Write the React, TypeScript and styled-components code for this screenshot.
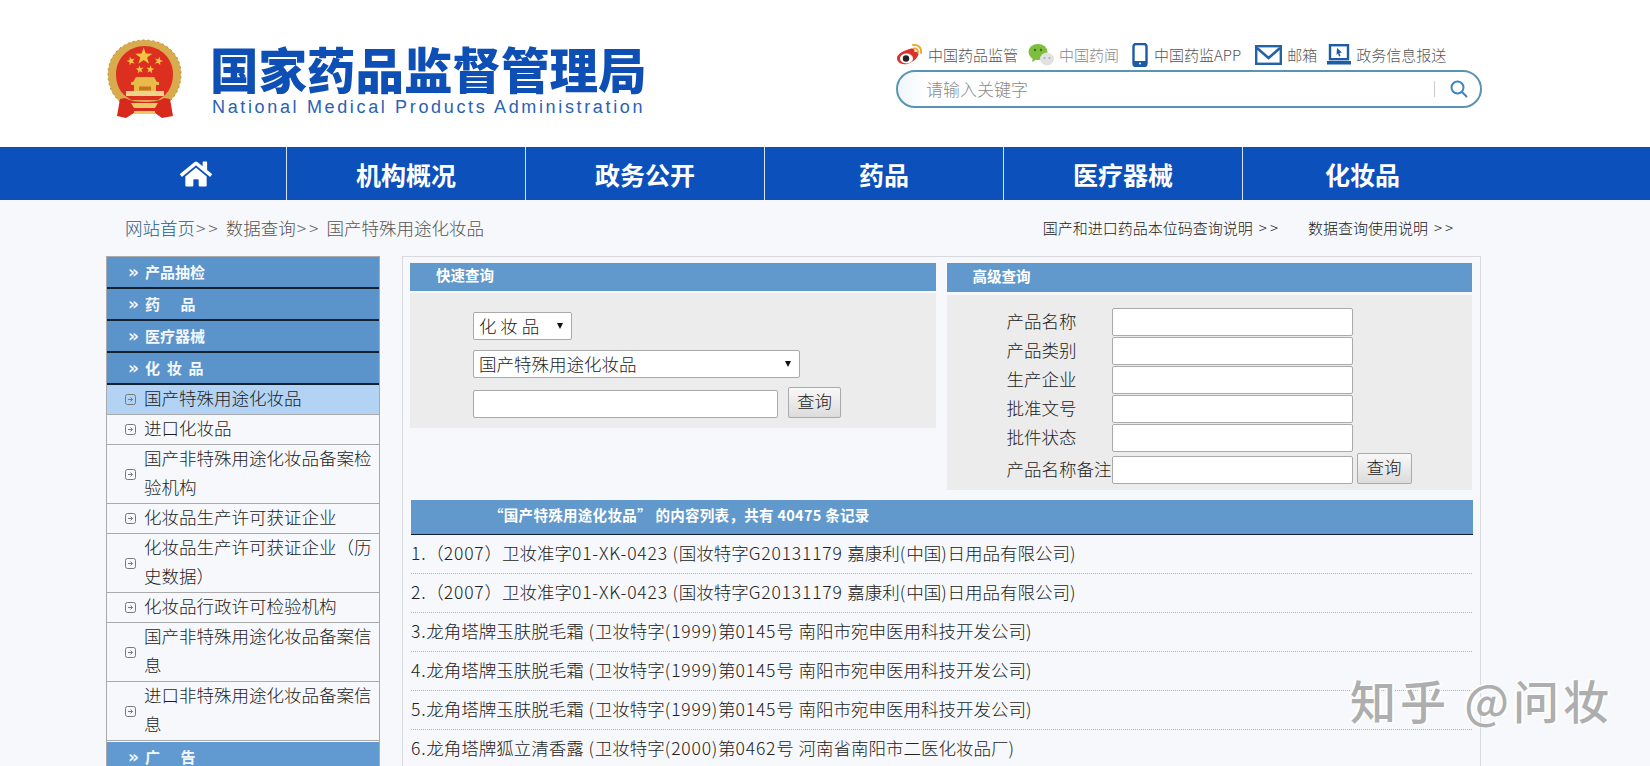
import React from "react";
import styled, { createGlobalStyle } from "styled-components";
import { FaHome } from "react-icons/fa";

const CJK = `"Noto Sans CJK SC", "Liberation Sans", sans-serif`;

const Global = createGlobalStyle`
  html, body { margin: 0; padding: 0; height: 766px; overflow: hidden; background: #f6f8fb; }
  body { font-family: ${CJK}; color: #333; }
  * { box-sizing: border-box; }
`;

const Page = styled.div`
  position: relative;
  width: 1650px;
  height: 766px;
  overflow: hidden;
`;
const Header = styled.header`
  height: 147px;
  background: #fff;
  padding: 0 168px 0 106px;
  display: flex;
  justify-content: space-between;
`;
const Logo = styled.div`
  display: flex;
  align-items: flex-start;
  padding-top: 39px;
`;
const EmblemBox = styled.div`
  width: 104px;
  flex: none;
  padding-left: 1px;
`;
const LogoText = styled.div`
  display: flex;
  flex-direction: column;
  padding-top: 1px;
  color: #0e4fb6;
`;
const LogoCn = styled.div`
  font-size: 48.5px;
  line-height: 56px;
  font-weight: 900;
  white-space: nowrap;
`;
const LogoEn = styled.div`
  font-family: "Liberation Sans", sans-serif;
  font-size: 18px;
  line-height: 22px;
  letter-spacing: 2.65px;
  padding-left: 2px;
  color: #2a62b4;
  white-space: nowrap;
`;
const Tools = styled.div`
  width: 586px;
  padding: 42px 0 0;
`;
const TopLinks = styled.div`
  display: flex;
  align-items: center;
  height: 26px;
`;
const TopLink = styled.a<{ $faint?: boolean; $gap?: number; $after?: number }>`
  display: flex;
  align-items: center;
  gap: ${(p) => p.$gap ?? 4}px;
  margin-right: ${(p) => p.$after ?? 10}px;
  font-size: 15px;
  line-height: 20px;
  font-weight: 300;
  color: ${(p) => (p.$faint ? "#888" : "#555")};
  white-space: nowrap;
`;
const SearchBar = styled.div`
  height: 38px;
  margin-top: 2px;
  border: 2px solid #5a94b2;
  border-radius: 19px;
  background: linear-gradient(90deg, #eef5fa 0, #fff 28px);
  display: flex;
  align-items: center;
  padding: 0 12px 0 29px;
`;
const SearchInput = styled.input`
  flex: 1;
  border: 0;
  outline: 0;
  padding: 0 0 2px;
  margin-left: -1px;
  background: transparent;
  font: 300 17px ${CJK};
  color: #888;
  &::placeholder { color: #8a8a8a; opacity: 1; }
`;
const SearchDivider = styled.span`
  width: 1px;
  height: 16px;
  background: #ccc;
  margin-right: 15px;
`;
const Nav = styled.nav`
  height: 53px;
  background: #0c50bc;
  padding-left: 106px;
`;
const NavRow = styled.ul`
  display: flex;
  width: 1376px;
  height: 53px;
  margin: 0;
  padding: 0;
  list-style: none;
`;
const NavItem = styled.li<{ $home?: boolean }>`
  width: ${(p) => (p.$home ? "181px" : "239px")};
  display: flex;
  align-items: center;
  justify-content: center;
  color: #fff;
  font-size: 25px;
  font-weight: 700;
  border-right: 1px solid #d6e3f5;
  &:last-child { border-right: 0; }
`;
const Crumbs = styled.div`
  height: 56px;
  width: 1482px;
  padding: 0 26px 0 125px;
  display: flex;
  justify-content: space-between;
  align-items: center;
`;
const CrumbPath = styled.div`
  font-size: 17.5px;
  font-weight: 300;
  color: #555;
  white-space: nowrap;
  margin-top: -2px;
`;
const CrumbHome = styled.a`
  color: #2a5a8a;
`;
const CrumbSep = styled.span`
  letter-spacing: 3px;
  margin: 0 5px 0 1px;
  color: #666;
`;
const CrumbLinks = styled.div`
  display: flex;
  gap: 27px;
  font-size: 15px;
  font-weight: 300;
  color: #222;
  margin-top: -2px;
`;
const CrumbArrow = styled.span`
  letter-spacing: 3px;
  margin-left: 6px;
`;
const Columns = styled.div`
  display: flex;
  padding-left: 106px;
  width: 1481px;
  gap: 22px;
`;
const Sidebar = styled.aside`
  width: 274px;
  flex: none;
  border-left: 1px solid #aaa;
  border-right: 1px solid #aaa;
  border-top: 1px solid #aaa;
`;
const SideHead = styled.div`
  display: flex;
  align-items: center;
  height: 32px;
  background: #5b93cb;
  border-bottom: 2px solid #10202f;
  color: #f4f8fc;
  font-size: 15px;
  font-weight: 700;
  line-height: 30px;
  padding-left: 21px;
  white-space: pre;
`;
const Chevron = styled.span`
  width: 17px;
  flex: none;
  font-family: "DejaVu Sans", sans-serif;
  font-size: 17px;
  line-height: 26px;
`;
const AdHead = styled(SideHead)`
  border-bottom: 0;
  margin-top: 1px;
  height: 30px;
  line-height: 26px;
  background: #6199d1;
`;
const SideItem = styled.a<{ $active?: boolean }>`
  display: flex;
  align-items: center;
  min-height: 30px;
  padding: 0 4px 0 18px;
  background: ${(p) => (p.$active ? "#b3d3f5" : "transparent")};
  border-bottom: 1px solid #aaa;
  font-size: 17.5px;
  line-height: 29px;
  font-weight: 300;
  color: #1c1c1c;
`;
const SideIcon = styled.svg`
  width: 11px;
  height: 11px;
  flex: none;
  margin-right: 8px;
`;
const SideLabel = styled.span`
  flex: 1;
  margin: -2px 0 2px;
`;
const Main = styled.main`
  flex: 1;
  height: 520px;
  border: 1px solid #d8dadd;
  border-bottom: 0;
  padding: 6px 8px 0 7px;
`;
const PanelRow = styled.div`
  display: flex;
  gap: 11px;
`;
const Panel = styled.section`
  flex: 1;
`;
const PanelHead = styled.div<{ $tall?: boolean }>`
  height: ${(p) => (p.$tall ? "29px" : "28px")};
  background: #6199cc;
  color: #fff;
  font-size: 14.5px;
  font-weight: 700;
  line-height: ${(p) => (p.$tall ? "26px" : "24px")};
  padding-left: 26px;
`;
const QuickBody = styled.div`
  margin-top: 2px;
  height: 135px;
  background: #ececec;
  padding: 19px 0 0 63px;
  display: flex;
  flex-direction: column;
  align-items: flex-start;
`;
const AdvBody = styled.div`
  margin-top: 3px;
  height: 195px;
  background: #ececec;
  padding: 13px 0 0 60px;
  display: flex;
  flex-direction: column;
`;
const SelectWrap = styled.div<{ $w: number; $gap: number }>`
  position: relative;
  width: ${(p) => p.$w}px;
  margin-bottom: ${(p) => p.$gap}px;
  &::after {
    content: "";
    position: absolute;
    right: 9px;
    top: 11px;
    border-left: 3.5px solid transparent;
    border-right: 3.5px solid transparent;
    border-top: 6px solid #111;
  }
`;
const Select = styled.select`
  appearance: none;
  width: 100%;
  height: 28px;
  background: #fff;
  border: 1px solid #aaa;
  border-radius: 2px;
  padding: 0 0 3px 5px;
  font: 300 17.5px ${CJK};
  color: #222;
  outline: 0;
`;
const Field = styled.input<{ $w: number }>`
  width: ${(p) => p.$w}px;
  height: 28px;
  background: #fff;
  border: 1px solid #aaa;
  border-radius: 2px;
  outline: 0;
`;
const QueryRow = styled.div`
  display: flex;
  align-items: flex-end;
  gap: 10px;
  margin-top: -3px;
`;
const QueryBtn = styled.button`
  width: 53px;
  height: 31px;
  padding: 0 0 4px;
  border: 1px solid #aaa;
  border-radius: 2px;
  background: linear-gradient(#f8f8f8, #dcdcdc);
  font: 300 17.5px ${CJK};
  color: #222;
`;
const FormRow = styled.label<{ $last?: boolean }>`
  display: flex;
  align-items: flex-end;
  height: 28px;
  margin-top: ${(p) => (p.$last ? 3 : 0)}px;
  margin-bottom: 1px;
`;
const FormLabel = styled.span`
  width: 105px;
  flex: none;
  font-size: 17.5px;
  line-height: 26px;
  margin-bottom: 2px;
  font-weight: 300;
  color: #222;
  white-space: nowrap;
`;
const FormBtn = styled(QueryBtn)`
  margin-left: 4px;
  width: 55px;
  flex: none;
`;
const ListHead = styled.div`
  margin: 10px -1px 0 1px;
  height: 35px;
  background: #6199cc;
  border-bottom: 1px solid #10202f;
  color: #fff;
  font-size: 14.5px;
  font-weight: 700;
  letter-spacing: 0.3px;
  line-height: 29px;
  padding-left: 78px;
`;
const List = styled.ol`
  list-style: none;
  margin: 0 0 0 1px;
  padding: 0;
`;
const ListRow = styled.li`
  height: 39px;
  line-height: 35px;
  border-bottom: 1px dotted #b5b5b5;
  font-size: 17.5px;
  font-weight: 300;
  color: #222;
  white-space: nowrap;
`;
const Latin = styled.span`
  letter-spacing: 0.8px;
`;
const Watermark = styled.div`
  position: absolute;
  left: 1350px;
  top: 669px;
  font-size: 46px;
  line-height: 60px;
  font-weight: 500;
  letter-spacing: 4px;
  color: #aeaeae;
  text-shadow: 2px 1px 0 #fff, -2px -1px 0 #fff;
  white-space: pre;
`;

const star = (cx: number, cy: number, r: number, rot = 0) => {
  const pts: string[] = [];
  for (let i = 0; i < 10; i++) {
    const rad = i % 2 ? r * 0.4 : r;
    const a = -Math.PI / 2 + rot + (i * Math.PI) / 5;
    pts.push(`${(cx + rad * Math.cos(a)).toFixed(1)},${(cy + rad * Math.sin(a)).toFixed(1)}`);
  }
  return pts.join(" ");
};

const Emblem = () => (
  <svg width="75" height="81" viewBox="0 0 75 81">
    <path d="M37.500 1C17 1 1 15 1 35c0 14 6 24 16 31h41c10-7 16-17 16-31C74 15 58 1 37.500 1Z" fill="#d8ac4e" />
    <path d="M37.500 1C17 1 1 15 1 35c0 14 6 24 16 31h41c10-7 16-17 16-31C74 15 58 1 37.500 1Z" fill="none" stroke="#b98a2e" strokeWidth="1" strokeDasharray="2 3" />
    <path d="M37.500 7C22 7 9 19 9 35c0 9 3 16 8 21l7 5h27l7-5c5-5 8-12 8-21C66 19 53 7 37.500 7Z" fill="#dc2f1f" />
    <polygon points={star(36.700, 17.500, 9)} fill="#f4c542" />
    <polygon points={star(24, 22, 4.500, -0.3)} fill="#f4c542" />
    <polygon points={star(51.700, 22, 4.500, 0.3)} fill="#f4c542" />
    <polygon points={star(32.700, 30.500, 4.200, -0.15)} fill="#f4c542" />
    <polygon points={star(43.300, 30.500, 4.200, 0.15)} fill="#f4c542" />
    <path d="M29 38h18l3 5H26ZM24 43h28v3H24ZM27 46h22v6H27Z" fill="#e9b949" />
    <path d="M19 52h38v5H19Z" fill="#efd38a" />
    <path d="M32 47.500h12v4H32Z" fill="#c8741f" />
    <path d="M13 60l5-1c6 3 12 4 20 4s14-1 19-4l6 1 3 17-11 2-7-5H27l-8 5-9-2Z" fill="#d82a1c" />
    <path d="M24 64h27l-3 5H27Z" fill="#eec866" />
    <path d="M27 72h21v3H27Z" fill="#eec866" />
  </svg>
);
const Weibo = () => (
  <svg width="27" height="24" viewBox="0 0 27 24">
    <path d="M11 7c4-2 7-2 7.500 0 .3 1-.2 2-.2 2s3-1 4 1c1 3-4 9-11 11C5 22 1 19 1 15c0-3 5-7 10-8Z" fill="#d9322a" />
    <ellipse cx="10.500" cy="15.500" rx="6.500" ry="5" fill="#fff" />
    <circle cx="10" cy="15.500" r="3.200" fill="#222" />
    <path d="M17 2c5-1 9 3 8 8M18 5.500c2.500-.5 4.500 1.500 4 4" fill="none" stroke="#eea52a" strokeWidth="1.800" strokeLinecap="round" />
  </svg>
);
const Wechat = () => (
  <svg width="27" height="24" viewBox="0 0 27 24">
    <ellipse cx="10" cy="9" rx="9.500" ry="8" fill="#7fbd3c" />
    <path d="M5 14l-1 5 5-3Z" fill="#7fbd3c" />
    <circle cx="7" cy="7" r="1.200" fill="#3e6e1c" />
    <circle cx="13" cy="7" r="1.200" fill="#3e6e1c" />
    <ellipse cx="19" cy="16" rx="7" ry="6.500" fill="#e2e2e2" />
    <circle cx="16.500" cy="15" r="1" fill="#aaa" />
    <circle cx="21.500" cy="15" r="1" fill="#aaa" />
  </svg>
);
const Phone = () => (
  <svg width="16" height="24" viewBox="0 0 16 24">
    <rect x="1.500" y="1" width="13" height="22" rx="2.500" fill="#fff" stroke="#1c5aa8" strokeWidth="2.400" />
    <rect x="1" y="18" width="14" height="5" rx="1.500" fill="#1c5aa8" />
    <circle cx="8" cy="20.500" r="1" fill="#fff" />
  </svg>
);
const Mail = () => (
  <svg width="27" height="20" viewBox="0 0 27 20">
    <rect x="1.200" y="1.200" width="24.600" height="17.600" fill="#fff" stroke="#2263a8" strokeWidth="2.400" />
    <path d="M2 3l11.500 10L25 3" fill="none" stroke="#2263a8" strokeWidth="2.600" />
  </svg>
);
const Monitor = () => (
  <svg width="24" height="22" viewBox="0 0 24 22">
    <rect x="3" y="1.200" width="18" height="14" fill="#fff" stroke="#1b5ca6" strokeWidth="2.400" />
    <path d="M10 4l5 4.500-2.500.5 1 3-1.500.5-1-3-1.500 1.500Z" fill="#1b5ca6" />
    <path d="M0 17h24v3.500H0Z" fill="#1b5ca6" />
  </svg>
);
const Magnifier = () => (
  <svg width="18" height="18" viewBox="0 0 18 18" fill="none" stroke="#3b84c4" strokeWidth="2">
    <circle cx="7.500" cy="7.500" r="6" />
    <path d="M12 12l4.500 4.500" strokeLinecap="round" />
  </svg>
);
const ExpandIcon = () => (
  <SideIcon viewBox="0 0 11 11" fill="none" stroke="#777">
    <rect x=".5" y=".5" width="10" height="10" rx="2" />
    <path d="M3 5.500h4.500M5.500 3.500l2 2-2 2" />
  </SideIcon>
);

const navItems = ["机构概况", "政务公开", "药品", "医疗器械", "化妆品"];
const heads = ["产品抽检", "药      品", "医疗器械", "化  妆  品"];
const sideItems = [
  "国产特殊用途化妆品",
  "进口化妆品",
  "国产非特殊用途化妆品备案检验机构",
  "化妆品生产许可获证企业",
  "化妆品生产许可获证企业（历史数据）",
  "化妆品行政许可检验机构",
  "国产非特殊用途化妆品备案信息",
  "进口非特殊用途化妆品备案信息",
];
const formLabels = ["产品名称", "产品类别", "生产企业", "批准文号", "批件状态"];
const rows = [
  "1.（2007）卫妆准字01-XK-0423 (国妆特字G20131179 嘉康利(中国)日用品有限公司)",
  "2.（2007）卫妆准字01-XK-0423 (国妆特字G20131179 嘉康利(中国)日用品有限公司)",
  "3.龙角塔牌玉肤脱毛霜 (卫妆特字(1999)第0145号 南阳市宛申医用科技开发公司)",
  "4.龙角塔牌玉肤脱毛霜 (卫妆特字(1999)第0145号 南阳市宛申医用科技开发公司)",
  "5.龙角塔牌玉肤脱毛霜 (卫妆特字(1999)第0145号 南阳市宛申医用科技开发公司)",
  "6.龙角塔牌狐立清香露 (卫妆特字(2000)第0462号 河南省南阳市二医化妆品厂)",
];

const spaced = (text: string) =>
  text.split(/([\x20-\x7e]+)/).map((part, i) =>
    /^[\x20-\x7e]+$/.test(part) ? <Latin key={i}>{part}</Latin> : part
  );

export default function App() {
  return (
    <Page>
      <Global />
      <Header>
        <Logo>
          <EmblemBox>
            <Emblem />
          </EmblemBox>
          <LogoText>
            <LogoCn>国家药品监督管理局</LogoCn>
            <LogoEn>National Medical Products Administration</LogoEn>
          </LogoText>
        </Logo>
        <Tools>
          <TopLinks>
            <TopLink $gap={5}><Weibo />中国药品监管</TopLink>
            <TopLink $faint $after={13}><Wechat />中国药闻</TopLink>
            <TopLink $gap={6} $after={14}><Phone />中国药监APP</TopLink>
            <TopLink $gap={5} $after={10}><Mail />邮箱</TopLink>
            <TopLink $gap={5}><Monitor />政务信息报送</TopLink>
          </TopLinks>
          <SearchBar>
            <SearchInput placeholder="请输入关键字" />
            <SearchDivider />
            <Magnifier />
          </SearchBar>
        </Tools>
      </Header>
      <Nav>
        <NavRow>
          <NavItem $home><FaHome size={32} /></NavItem>
          {navItems.map((n) => <NavItem key={n}>{n}</NavItem>)}
        </NavRow>
      </Nav>
      <Crumbs>
        <CrumbPath>
          <CrumbHome>网站首页</CrumbHome><CrumbSep>&gt;&gt;</CrumbSep>数据查询<CrumbSep>&gt;&gt;</CrumbSep>国产特殊用途化妆品
        </CrumbPath>
        <CrumbLinks>
          <span>国产和进口药品本位码查询说明<CrumbArrow>&gt;&gt;</CrumbArrow></span>
          <span>数据查询使用说明<CrumbArrow>&gt;&gt;</CrumbArrow></span>
        </CrumbLinks>
      </Crumbs>
      <Columns>
        <Sidebar>
          {heads.map((h) => <SideHead key={h}><Chevron>»</Chevron>{h}</SideHead>)}
          {sideItems.map((s, i) => (
            <SideItem key={s} $active={i === 0}>
              <ExpandIcon />
              <SideLabel>{s}</SideLabel>
            </SideItem>
          ))}
          <AdHead><Chevron>»</Chevron>广      告</AdHead>
        </Sidebar>
        <Main>
          <PanelRow>
            <Panel>
              <PanelHead>快速查询</PanelHead>
              <QuickBody>
                <SelectWrap $w={99} $gap={10}>
                  <Select defaultValue="a"><option value="a">化 妆 品</option></Select>
                </SelectWrap>
                <SelectWrap $w={327} $gap={12}>
                  <Select defaultValue="b"><option value="b">国产特殊用途化妆品</option></Select>
                </SelectWrap>
                <QueryRow>
                  <Field $w={305} />
                  <QueryBtn>查询</QueryBtn>
                </QueryRow>
              </QuickBody>
            </Panel>
            <Panel>
              <PanelHead $tall>高级查询</PanelHead>
              <AdvBody>
                {formLabels.map((l) => (
                  <FormRow key={l}>
                    <FormLabel>{l}</FormLabel>
                    <Field $w={241} />
                  </FormRow>
                ))}
                <FormRow $last>
                  <FormLabel>产品名称备注</FormLabel>
                  <Field $w={241} />
                  <FormBtn>查询</FormBtn>
                </FormRow>
              </AdvBody>
            </Panel>
          </PanelRow>
          <ListHead>“国产特殊用途化妆品” 的内容列表，共有 40475 条记录</ListHead>
          <List>
            {rows.map((r, i) => <ListRow key={i}>{spaced(r)}</ListRow>)}
          </List>
        </Main>
      </Columns>
      <Watermark>知乎 @问妆</Watermark>
    </Page>
  );
}
